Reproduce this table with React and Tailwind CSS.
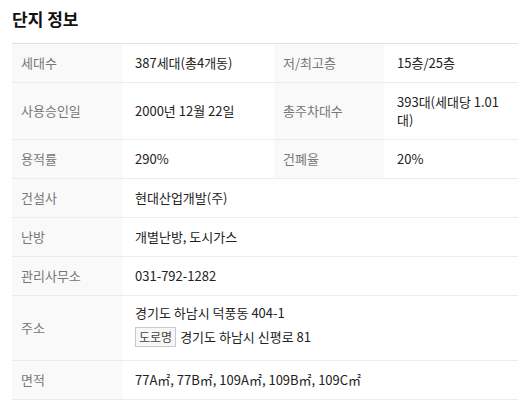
const rows = [
  { type: 'pair', cells: [['세대수', '387세대(총4개동)'], ['저/최고층', '15층/25층']] },
  { type: 'pair', cells: [['사용승인일', '2000년 12월 22일'], ['총주차대수', '393대(세대당 1.01 대)']] },
  { type: 'pair', cells: [['용적률', '290%'], ['건폐율', '20%']] },
  { type: 'single', label: '건설사', value: '현대산업개발(주)' },
  { type: 'single', label: '난방', value: '개별난방, 도시가스' },
  { type: 'single', label: '관리사무소', value: '031-792-1282' },
  { type: 'address' },
  { type: 'single', label: '면적', value: '77A㎡, 77B㎡, 109A㎡, 109B㎡, 109C㎡' },
];

function Label({ children }) {
  return (
    <div className="flex items-center bg-[#f9f9f9] pl-[9px] pr-2 py-[10px] text-[#777]">
      {children}
    </div>
  );
}

function Value({ children, span }) {
  return (
    <div className={`flex items-center pl-[13px] pr-2 py-[10px] text-[#222] ${span ? 'col-span-3' : ''}`}>
      <div>{children}</div>
    </div>
  );
}

export default function App() {
  return (
    <div
      className="bg-white w-[525px] h-[409px] overflow-hidden px-3 pt-[8px] text-[13px] leading-[18px]"
      style={{ fontFamily: '"Malgun Gothic", "Noto Sans CJK KR", "Noto Sans", sans-serif' }}
    >
      <h2 className="text-[17px] font-bold text-[#111] leading-[22px] pb-[13px]">단지 정보</h2>

      <div className="w-[506px] border-t border-[#e2e2e2]">
        {rows.map((row, i) => {
          if (row.type === 'pair') {
            return (
              <div key={i} className="grid grid-cols-[110px_152px_110px_134px] border-b border-[#ececec]">
                <Label>{row.cells[0][0]}</Label>
                <Value>{row.cells[0][1]}</Value>
                <Label>{row.cells[1][0]}</Label>
                <Value>{row.cells[1][1]}</Value>
              </div>
            );
          }
          if (row.type === 'address') {
            return (
              <div key={i} className="grid grid-cols-[110px_152px_110px_134px] border-b border-[#ececec]">
                <Label>주소</Label>
                <div className="col-span-3 flex flex-col justify-center pl-[13px] pr-2 pt-[7px] pb-[13px] text-[#222]">
                  <div className="leading-[20px]">경기도 하남시 덕풍동 404-1</div>
                  <div className="mt-[4px] flex items-center gap-[4px] leading-[20px]">
                    <span className="border border-[#c8c8c8] bg-[#f7f7f7] px-[3px] text-[12px] leading-[18px] text-[#444]">
                      도로명
                    </span>
                    <span>경기도 하남시 신평로 81</span>
                  </div>
                </div>
              </div>
            );
          }
          return (
            <div key={i} className="grid grid-cols-[110px_152px_110px_134px] border-b border-[#ececec]">
              <Label>{row.label}</Label>
              <Value span>{row.value}</Value>
            </div>
          );
        })}
      </div>
    </div>
  );
}
